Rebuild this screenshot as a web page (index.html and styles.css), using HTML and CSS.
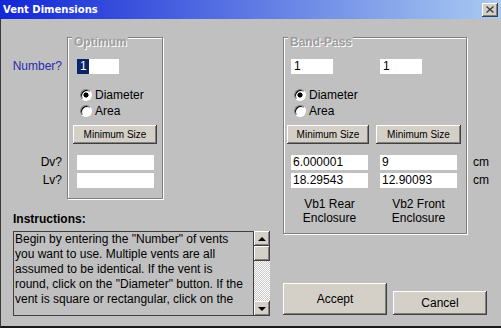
FILE: index.html
```html
<!DOCTYPE html>
<html lang="en">
<head>
  <meta charset="UTF-8">
  <title>Vent Dimensions</title>
  <link rel="stylesheet" href="styles.css">
</head>
<body>

  <div class="dialog">
    <div class="titlebar">
      <span class="title">Vent Dimensions</span>
      <span class="close">
        <svg width="8" height="7" viewBox="0 0 8 7"><path d="M0.5 0.5 L7.5 6.5 M7.5 0.5 L0.5 6.5" stroke="#404040" stroke-width="1.4" fill="none"/></svg>
      </span>
    </div>

    <div class="content">
      <div class="left">
        <div class="opt-row">
          <div class="side-labels">
            <div class="lbl-number">Number?</div>
            <div class="lbl-dv">Dv?</div>
            <div class="lbl-lv">Lv?</div>
          </div>
          <div class="group optimum">
            <span class="legend">Optimum</span>
            <div class="field num"><span class="sel">1</span></div>
            <div class="radios">
              <div class="radio on"><span class="dot"></span>Diameter</div>
              <div class="radio"><span class="dot"></span>Area</div>
            </div>
            <div class="btn btn-small opt-min">Minimum Size</div>
            <div class="field opt-dv"></div>
            <div class="field opt-lv"></div>
          </div>
        </div>

        <div class="instructions">
          <div class="instr-title">Instructions:</div>
          <div class="textbox">
            <div class="text">
              Begin by entering the "Number" of vents<br>
              you want to use. Multiple vents are all<br>
              assumed to be identical. If the vent is<br>
              round, click on the "Diameter" button. If the<br>
              vent is square or rectangular, click on the
            </div>
            <div class="scrollbar">
              <div class="sb-btn"><span class="arrow-up"></span></div>
              <div class="sb-btn"></div>
              <div class="sb-track"></div>
              <div class="sb-btn"><span class="arrow-down"></span></div>
            </div>
          </div>
        </div>
      </div>

      <div class="right">
        <div class="bp-row">
          <div class="group bandpass">
            <span class="legend">Band-Pass</span>
            <div class="bp-fields first">
              <div class="field short">1</div>
              <div class="field short">1</div>
            </div>
            <div class="radios bp-radios">
              <div class="radio on"><span class="dot"></span>Diameter</div>
              <div class="radio"><span class="dot"></span>Area</div>
            </div>
            <div class="bp-btns">
              <div class="btn btn-small rear">Minimum Size</div>
              <div class="btn btn-small front">Minimum Size</div>
            </div>
            <div class="bp-fields dv">
              <div class="field">6.000001</div>
              <div class="field">9</div>
            </div>
            <div class="bp-fields lv">
              <div class="field">18.29543</div>
              <div class="field">12.90093</div>
            </div>
            <div class="bp-labels">
              <div>Vb1 Rear<br>Enclosure</div>
              <div>Vb2 Front<br>Enclosure</div>
            </div>
          </div>
          <div class="units">
            <div>cm</div>
            <div>cm</div>
          </div>
        </div>

        <div class="actions">
          <div class="btn accept">Accept</div>
          <div class="btn cancel">Cancel</div>
        </div>
      </div>
    </div>
  </div>

</body>
</html>
```

FILE: styles.css
```css
* {
  margin: 0;
  padding: 0;
  box-sizing: border-box;
}
body {
  background: #c0c0c0;
  color: #000;
  font-family: "Liberation Sans", Arial, sans-serif;
  font-size: 12px;
}
.dialog {
  width: 501px;
  height: 328px;
  display: flex;
  flex-direction: column;
}

/* title bar */
.titlebar {
  height: 19px;
  flex: none;
  display: flex;
  align-items: center;
  justify-content: space-between;
  padding: 0 3px;
  background: linear-gradient(to right, #1226d6, #a9cbf1);
}
.title {
  color: #fff;
  font-family: "DejaVu Sans", sans-serif;
  font-weight: bold;
  font-size: 10px;
}
.close {
  width: 16px;
  height: 14px;
  display: flex;
  align-items: center;
  justify-content: center;
  background: #d4d0c8;
  box-shadow: inset -1px -1px #404040, inset 1px 1px #fff, inset -2px -2px #808080;
}

.content {
  flex: 1;
  display: flex;
  padding-top: 18px;
  border-left: 1px solid #3a3a3a;
  border-bottom: 2px solid #1a1a1a;
}
.left {
  width: 282px;
}
.opt-row {
  display: flex;
}
.side-labels {
  width: 61px;
  text-align: right;
  line-height: 15px;
}
.lbl-number {
  margin-top: 22px;
  color: #2b2bb0;
}
.lbl-dv {
  margin-top: 81px;
}
.lbl-lv {
  margin-top: 3px;
}

/* group boxes */
.group {
  position: relative;
  border: 1px solid #808080;
  box-shadow: inset 1px 1px #fff, 1px 1px #fff;
}
.legend {
  position: absolute;
  top: -2px;
  left: 4px;
  padding: 0 1px 0 2px;
  background: #c0c0c0;
  color: #9c9c9c;
  font-weight: bold;
  line-height: 12px;
  text-shadow: 1px 1px #fff;
}
.optimum {
  margin-left: 5px;
  width: 96px;
  height: 162px;
}
.bandpass {
  width: 184px;
  height: 197px;
}

.field {
  height: 15px;
  line-height: 15px;
  padding-left: 2px;
  background: #fff;
}
.num {
  width: 42px;
  margin: 21px 0 0 9px;
  padding-left: 0;
}
.sel {
  display: inline-block;
  height: 15px;
  padding: 0 2px 0 3px;
  background: #0a246a;
  color: #fff;
}
.opt-dv,
.opt-lv {
  width: 77px;
  margin-left: 9px;
}
.opt-dv {
  margin-top: 11px;
}
.opt-lv {
  margin-top: 3px;
}

.radios {
  margin-top: 13px;
  padding-left: 12px;
}
.bp-radios {
  padding-left: 10px;
}
.radio {
  display: flex;
  align-items: center;
  height: 16px;
}
.dot {
  width: 12px;
  height: 12px;
  margin-right: 3px;
  border-radius: 50%;
  border: 1px solid;
  border-color: #808080 #fff #fff #808080;
  background: #fff;
  box-shadow: inset 1px 1px #000;
}
.radio.on .dot {
  background: radial-gradient(circle at 50% 50%, #000 0 2.3px, #fff 2.8px);
}

.btn {
  display: flex;
  align-items: center;
  justify-content: center;
  background: #d4d0c8;
  box-shadow: inset -1px -1px #404040, inset 1px 1px #fff, inset -2px -2px #808080;
}
.btn-small {
  height: 19px;
  font-size: 10px;
}
.opt-min {
  width: 84px;
  margin: 6px 0 0 5px;
}

/* band-pass */
.bp-fields {
  display: flex;
  gap: 12px;
  padding-left: 7px;
}
.bp-fields .field {
  width: 77px;
}
.bp-fields .field.short {
  width: 42px;
  padding-left: 3px;
  margin-right: 35px;
}
.bp-fields.first {
  margin-top: 21px;
}
.bp-fields.dv {
  margin-top: 11px;
}
.bp-fields.lv {
  margin-top: 3px;
}
.bp-btns {
  display: flex;
  gap: 7px;
  padding-left: 3px;
  margin-top: 6px;
}
.rear {
  width: 82px;
}
.front {
  width: 85px;
}
.bp-labels {
  display: flex;
  gap: 12px;
  padding-left: 7px;
  margin-top: 9px;
  line-height: 14px;
  text-align: center;
}
.bp-labels div {
  width: 77px;
}
.bp-row {
  display: flex;
}
.units {
  margin: 118px 0 0 6px;
  line-height: 15px;
}
.units div + div {
  margin-top: 3px;
}

.actions {
  display: flex;
  align-items: flex-end;
  gap: 6px;
  margin-top: 49px;
}
.accept {
  width: 104px;
  height: 32px;
}
.cancel {
  width: 94px;
  height: 24px;
}

/* instructions */
.instructions {
  margin-top: 13px;
  padding-left: 12px;
}
.instr-title {
  font-weight: bold;
  line-height: 15px;
}
.textbox {
  display: flex;
  height: 85px;
  margin-top: 4px;
}
.text {
  width: 241px;
  padding-left: 1px;
  border: 1px solid #404040;
  line-height: 15px;
  white-space: nowrap;
  overflow: hidden;
}
.scrollbar {
  width: 16px;
  display: flex;
  flex-direction: column;
}
.sb-btn {
  height: 15px;
  display: flex;
  align-items: center;
  justify-content: center;
  background: #d4d0c8;
  box-shadow: inset -1px -1px #404040, inset 1px 1px #fff, inset -2px -2px #808080;
}
.sb-track {
  flex: 1;
  background: repeating-conic-gradient(#fff 0 25%, #c8c8c8 0 50%) 0 0 / 2px 2px;
}
.arrow-up,
.arrow-down {
  width: 0;
  height: 0;
  border-left: 4px solid transparent;
  border-right: 4px solid transparent;
}
.arrow-up {
  border-bottom: 4px solid #000;
}
.arrow-down {
  border-top: 4px solid #000;
}
```
